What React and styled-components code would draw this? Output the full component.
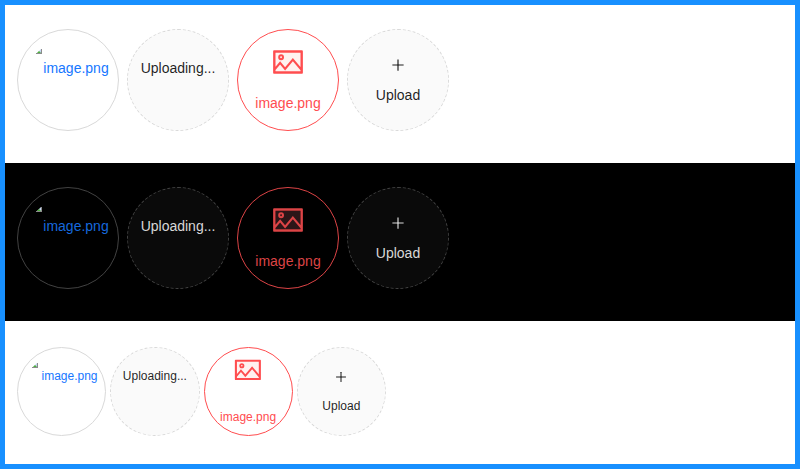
import React from "react";
import styled, { createGlobalStyle, ThemeProvider } from "styled-components";

const GlobalStyle = createGlobalStyle`
  * { box-sizing: border-box; }
  body { margin: 0; background: #1890ff; font-family: "Liberation Sans", Arial, sans-serif; }
`;

const light = {
  background: "#ffffff",
  border: "#d9d9d9",
  fill: "rgba(0, 0, 0, 0.02)",
  text: "rgba(0, 0, 0, 0.88)",
  link: "#1677ff",
  error: "#ff4d4f",
  errorFill: "#fff2f0",
  height: 158,
  inset: 24,
  size: 102,
  gap: 8,
  font: 14,
  line: 22,
  picture: 34,
  plus: 16,
  brokenTop: 19,
  brokenLeft: 18,
  doneTextTop: 3,
  doneTextLeft: 25.3,
  uploadingTop: 27,
  pictureTop: 15,
  errorGap: 13,
  plusTop: 27,
  plusGap: 11,
};

const dark = {
  ...light,
  background: "#000000",
  border: "#424242",
  fill: "rgba(255, 255, 255, 0.04)",
  text: "rgba(255, 255, 255, 0.85)",
  link: "#1668dc",
  error: "#dc4446",
  errorFill: "#2c1618",
};

const compact = {
  ...light,
  height: 143,
  inset: 26,
  size: 89.25,
  gap: 4,
  font: 12,
  line: 20,
  picture: 29.75,
  plus: 14,
  brokenTop: 15,
  brokenLeft: 14,
  doneTextTop: -2,
  doneTextLeft: 23.5,
  uploadingTop: 18,
  pictureTop: 7.25,
  errorGap: 21.75,
  plusTop: 22,
  plusGap: 12,
};

const Frame = styled.main`
  width: 800px;
  height: 469px;
  border: 5px solid #1890ff;
`;

const Section = styled.section`
  height: ${({ theme }) => theme.height}px;
  padding: ${({ theme }) => theme.inset}px 12px;
  background: ${({ theme }) => theme.background};
`;

const UploadList = styled.div`
  display: flex;
  gap: ${({ theme }) => theme.gap}px;
`;

const Circle = styled.div`
  display: flex;
  flex: none;
  flex-direction: column;
  align-items: center;
  width: ${({ theme }) => theme.size}px;
  height: ${({ theme }) => theme.size}px;
  border: 1px solid ${({ theme }) => theme.border};
  border-radius: 50%;
  color: ${({ theme }) => theme.text};
  font-size: ${({ theme }) => theme.font}px;
  line-height: ${({ theme }) => theme.line}px;
  white-space: nowrap;
`;

const DoneCircle = styled(Circle)`
  align-items: flex-start;
  padding-top: ${({ theme }) => theme.brokenTop - 1}px;
  color: ${({ theme }) => theme.link};
`;

const DoneName = styled.span`
  margin: ${({ theme }) => theme.doneTextTop}px 0 0 ${({ theme }) => theme.doneTextLeft}px;
`;

const UploadingCircle = styled(Circle)`
  padding-top: ${({ theme }) => theme.uploadingTop}px;
  border-style: dashed;
  background: ${({ theme }) => theme.fill};
`;

const ErrorCircle = styled(Circle)`
  padding-top: ${({ theme }) => theme.pictureTop}px;
  border-color: ${({ theme }) => theme.error};
  color: ${({ theme }) => theme.error};
`;

const ErrorName = styled.span`
  margin-top: ${({ theme }) => theme.errorGap}px;
`;

const UploadButton = styled(Circle).attrs({ as: "button", type: "button" })`
  justify-content: flex-start;
  padding: ${({ theme }) => theme.plusTop}px 0 0;
  border-style: dashed;
  background: ${({ theme }) => theme.fill};
  font-family: inherit;
`;

const UploadLabel = styled.span`
  margin-top: ${({ theme }) => theme.plusGap}px;
`;

const BrokenSvg = styled.svg`
  flex: none;
  display: block;
  width: 6px;
  height: 6px;
  margin-left: ${({ theme }) => theme.brokenLeft}px;
`;

const PictureSvg = styled.svg`
  flex: none;
  width: ${({ theme }) => theme.picture}px;
  height: ${({ theme }) => theme.picture}px;
  fill: ${({ theme }) => theme.error};
`;

const PictureTint = styled.path`
  fill: ${({ theme }) => theme.errorFill};
`;

const PlusSvg = styled.svg`
  flex: none;
  width: ${({ theme }) => theme.plus}px;
  height: ${({ theme }) => theme.plus}px;
  fill: currentColor;
`;

function BrokenIcon() {
  return (
    <BrokenSvg viewBox="0 0 6 6" aria-hidden="true">
      <path d="M0 6 5 1H6V6Z" fill="#c5d5f3" />
      <path d="M1 5 3 3 5 5Z" fill="#4eb139" />
      <path d="M0 5H6V6H0ZM5 1H6V6H5Z" fill="#8c8c8c" />
    </BrokenSvg>
  );
}

function PictureIcon() {
  return (
    <PictureSvg viewBox="0 0 1024 1024" aria-hidden="true">
      <PictureTint d="M136 232H888V792H136Z" />
      <path d="M928 160H96c-17.7 0-32 14.3-32 32v640c0 17.7 14.3 32 32 32h832c17.7 0 32-14.3 32-32V192c0-17.7-14.3-32-32-32zm-40 632H136v-39.9l138.5-164.3 150.1 178L658.1 489 888 761.6V792zm0-129.8L664.2 396.8c-3.2-3.8-9-3.8-12.2 0L424.6 666.4l-144-170.7c-3.2-3.8-9-3.8-12.2 0L136 652.7V232h752v430.2z" />
      <path d="M304 456a88 88 0 100-176 88 88 0 000 176zm0-116c15.5 0 28 12.5 28 28s-12.5 28-28 28-28-12.5-28-28 12.5-28 28-28z" />
    </PictureSvg>
  );
}

function PlusIcon() {
  return (
    <PlusSvg viewBox="0 0 1024 1024" aria-hidden="true">
      <path d="M482 152h60q8 0 8 8v704q0 8-8 8h-60q-8 0-8-8V160q0-8 8-8z" />
      <path d="M160 474h704q8 0 8 8v60q0 8-8 8H160q-8 0-8-8v-60q0-8 8-8z" />
    </PlusSvg>
  );
}

function UploadSection({ theme }) {
  return (
    <ThemeProvider theme={theme}>
      <Section>
        <UploadList>
          <DoneCircle>
            <BrokenIcon />
            <DoneName>image.png</DoneName>
          </DoneCircle>
          <UploadingCircle>Uploading...</UploadingCircle>
          <ErrorCircle>
            <PictureIcon />
            <ErrorName>image.png</ErrorName>
          </ErrorCircle>
          <UploadButton>
            <PlusIcon />
            <UploadLabel>Upload</UploadLabel>
          </UploadButton>
        </UploadList>
      </Section>
    </ThemeProvider>
  );
}

export default function App() {
  return (
    <>
      <GlobalStyle />
      <Frame>
        <UploadSection theme={light} />
        <UploadSection theme={dark} />
        <UploadSection theme={compact} />
      </Frame>
    </>
  );
}
